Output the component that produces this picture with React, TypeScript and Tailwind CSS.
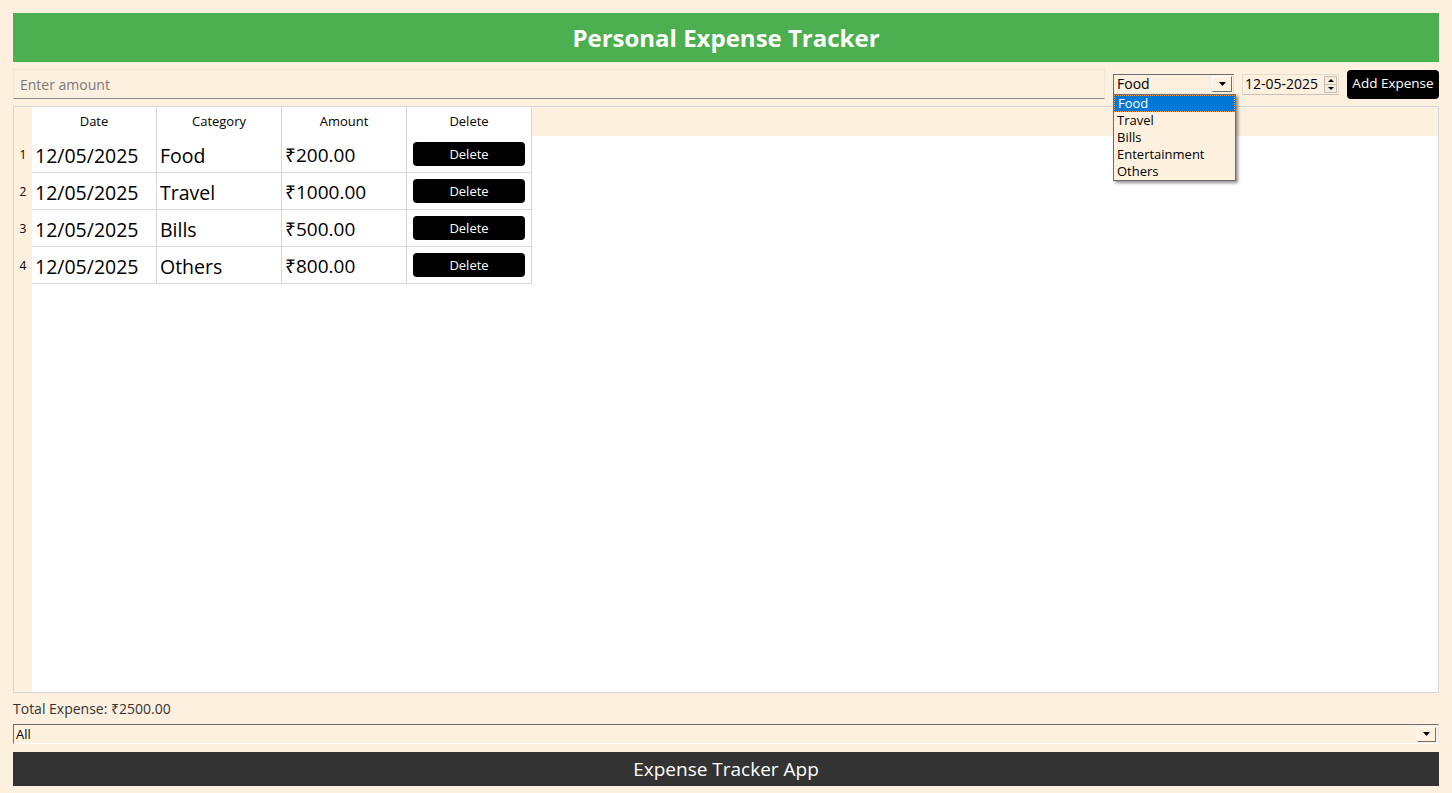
import { useState } from 'react';

interface Expense {
    date: string;
    category: string;
    amount: number;
}

const CATEGORIES = ['Food', 'Travel', 'Bills', 'Entertainment', 'Others'];

const INITIAL: Expense[] = [
    { date: '12/05/2025', category: 'Food', amount: 200 },
    { date: '12/05/2025', category: 'Travel', amount: 1000 },
    { date: '12/05/2025', category: 'Bills', amount: 500 },
    { date: '12/05/2025', category: 'Others', amount: 800 },
];

function ArrowBox({ className = '' }: { className?: string }) {
    return (
        <div className={`flex items-center justify-center border border-t-white border-l-white border-r-[#707070] border-b-[#707070] bg-[#fef0df] ${className}`}>
            <svg width="7" height="4" viewBox="0 0 7 4">
                <path d="M0 0h7L3.5 4z" fill="#000" />
            </svg>
        </div>
    );
}

export default function App() {
    const [expenses, setExpenses] = useState<Expense[]>(INITIAL);
    const [category] = useState('Food');

    const total = expenses.reduce((sum, e) => sum + e.amount, 0);

    const handleDelete = (index: number) => {
        setExpenses(prev => prev.filter((_, i) => i !== index));
    };

    return (
        <div className="w-[1452px] h-[793px] bg-[#fef0df] px-[13px] pt-[13px] flex flex-col font-['Open_Sans',sans-serif] text-black overflow-hidden">
            {/* Header */}
            <div className="h-[49px] bg-[#4caf50] flex items-center justify-center">
                <h1 className="text-white text-[24px] font-bold leading-none">Personal Expense Tracker</h1>
            </div>

            {/* Input row */}
            <div className="flex items-center mt-[7px] h-[30px]">
                <div className="w-[1092px] h-[30px] border border-[#f0e6d8] border-b-[#8a8a8a] flex items-center px-[6px]">
                    <input
                        placeholder="Enter amount"
                        className="w-full bg-transparent outline-none text-[14px] placeholder:text-[#7a7a7a]"
                    />
                </div>

                {/* Category combo with open list */}
                <div className="relative ml-[8px] w-[121px]">
                    <div className="h-[21px] border border-t-[#6d6d6d] border-l-[#6d6d6d] border-r-[#e0e0e0] border-b-white flex items-center pl-[3px] pr-[1px]">
                        <span className="flex-1 text-[14px] leading-none">{category}</span>
                        <ArrowBox className="w-[20px] h-[16px]" />
                    </div>
                    <div className="absolute left-0 top-[20px] w-[123px] bg-[#fef0df] border border-[#6d6d6d] shadow-[2px_2px_3px_rgba(0,0,0,0.45)] z-10">
                        {CATEGORIES.map((c, i) => (
                            <div
                                key={c}
                                className={`h-[17px] px-[3px] text-[13px] leading-[15px] flex items-center ${i === 0 ? 'bg-[#0078d7] text-white border border-dotted border-[#f0a040] px-[2px]' : 'text-black'}`}
                            >
                                {c}
                            </div>
                        ))}
                    </div>
                </div>

                {/* Date */}
                <div className="ml-[8px] w-[97px] h-[21px] border border-[#e6dccc] border-b-[#c8c0b4] flex items-center pl-[2px]">
                    <span className="flex-1 text-[14px] leading-none">12-05-2025</span>
                    <div className="w-[13px] h-[17px] flex flex-col mr-[1px]">
                        <div className="flex-1 flex items-center justify-center border border-[#c8c0b4] bg-[#f5ece0]">
                            <svg width="6" height="3" viewBox="0 0 6 3"><path d="M3 0L6 3H0z" fill="#000" /></svg>
                        </div>
                        <div className="flex-1 flex items-center justify-center border border-t-0 border-[#c8c0b4] bg-[#f5ece0]">
                            <svg width="6" height="3" viewBox="0 0 6 3"><path d="M0 0h6L3 3z" fill="#000" /></svg>
                        </div>
                    </div>
                </div>

                <button className="ml-auto h-[29px] w-[92px] bg-black text-white rounded-[4px] text-[13.5px] leading-none">
                    Add Expense
                </button>
            </div>

            {/* Table */}
            <div className="mt-[7px] h-[587px] border border-[#d8d8d8] flex flex-col">
                <div className="flex h-[29px] shrink-0">
                    <div className="w-[18px]" />
                    {['Date', 'Category', 'Amount', 'Delete'].map(h => (
                        <div key={h} className="w-[125px] bg-white border-r border-[#d8d8d8] flex items-center justify-center text-[13px]">
                            {h}
                        </div>
                    ))}
                </div>
                <div className="flex flex-1">
                    <div className="w-[18px] flex flex-col">
                        {expenses.map((_, i) => (
                            <div key={i} className="h-[37px] flex items-center justify-center text-[12px]">
                                {i + 1}
                            </div>
                        ))}
                    </div>
                    <div className="flex-1 bg-white">
                        {expenses.map((e, i) => (
                            <div key={i} className="flex h-[37px] border-b border-[#d8d8d8] w-[500px]">
                                <div className="w-[125px] border-r border-[#d8d8d8] flex items-center pl-[3px] pt-[3px] text-[19.5px]">{e.date}</div>
                                <div className="w-[125px] border-r border-[#d8d8d8] flex items-center pl-[3px] pt-[3px] text-[19.5px]">{e.category}</div>
                                <div className="w-[125px] border-r border-[#d8d8d8] flex items-center pl-[3px] pt-[3px] text-[19px]">₹{e.amount.toFixed(2)}</div>
                                <div className="w-[125px] border-r border-[#d8d8d8] flex items-center justify-center">
                                    <button
                                        onClick={() => handleDelete(i)}
                                        className="w-[112px] h-[24px] bg-black text-white rounded-[4px] text-[13px] leading-none"
                                    >
                                        Delete
                                    </button>
                                </div>
                            </div>
                        ))}
                    </div>
                </div>
            </div>

            {/* Total */}
            <div className="mt-[8px] text-[14px] text-[#333] leading-none h-[16px] flex items-center">
                Total Expense: ₹{total.toFixed(2)}
            </div>

            {/* Filter */}
            <div className="mt-[7px] h-[20px] border border-t-[#6d6d6d] border-l-[#6d6d6d] border-r-[#e8e8e8] border-b-white flex items-center pl-[2px] pr-[2px]">
                <span className="flex-1 text-[13px] leading-none">All</span>
                <ArrowBox className="w-[19px] h-[15px]" />
            </div>

            {/* Footer */}
            <div className="mt-[8px] h-[34px] bg-[#333333] flex items-center justify-center">
                <span className="text-white text-[19px] leading-none">Expense Tracker App</span>
            </div>
        </div>
    );
}
